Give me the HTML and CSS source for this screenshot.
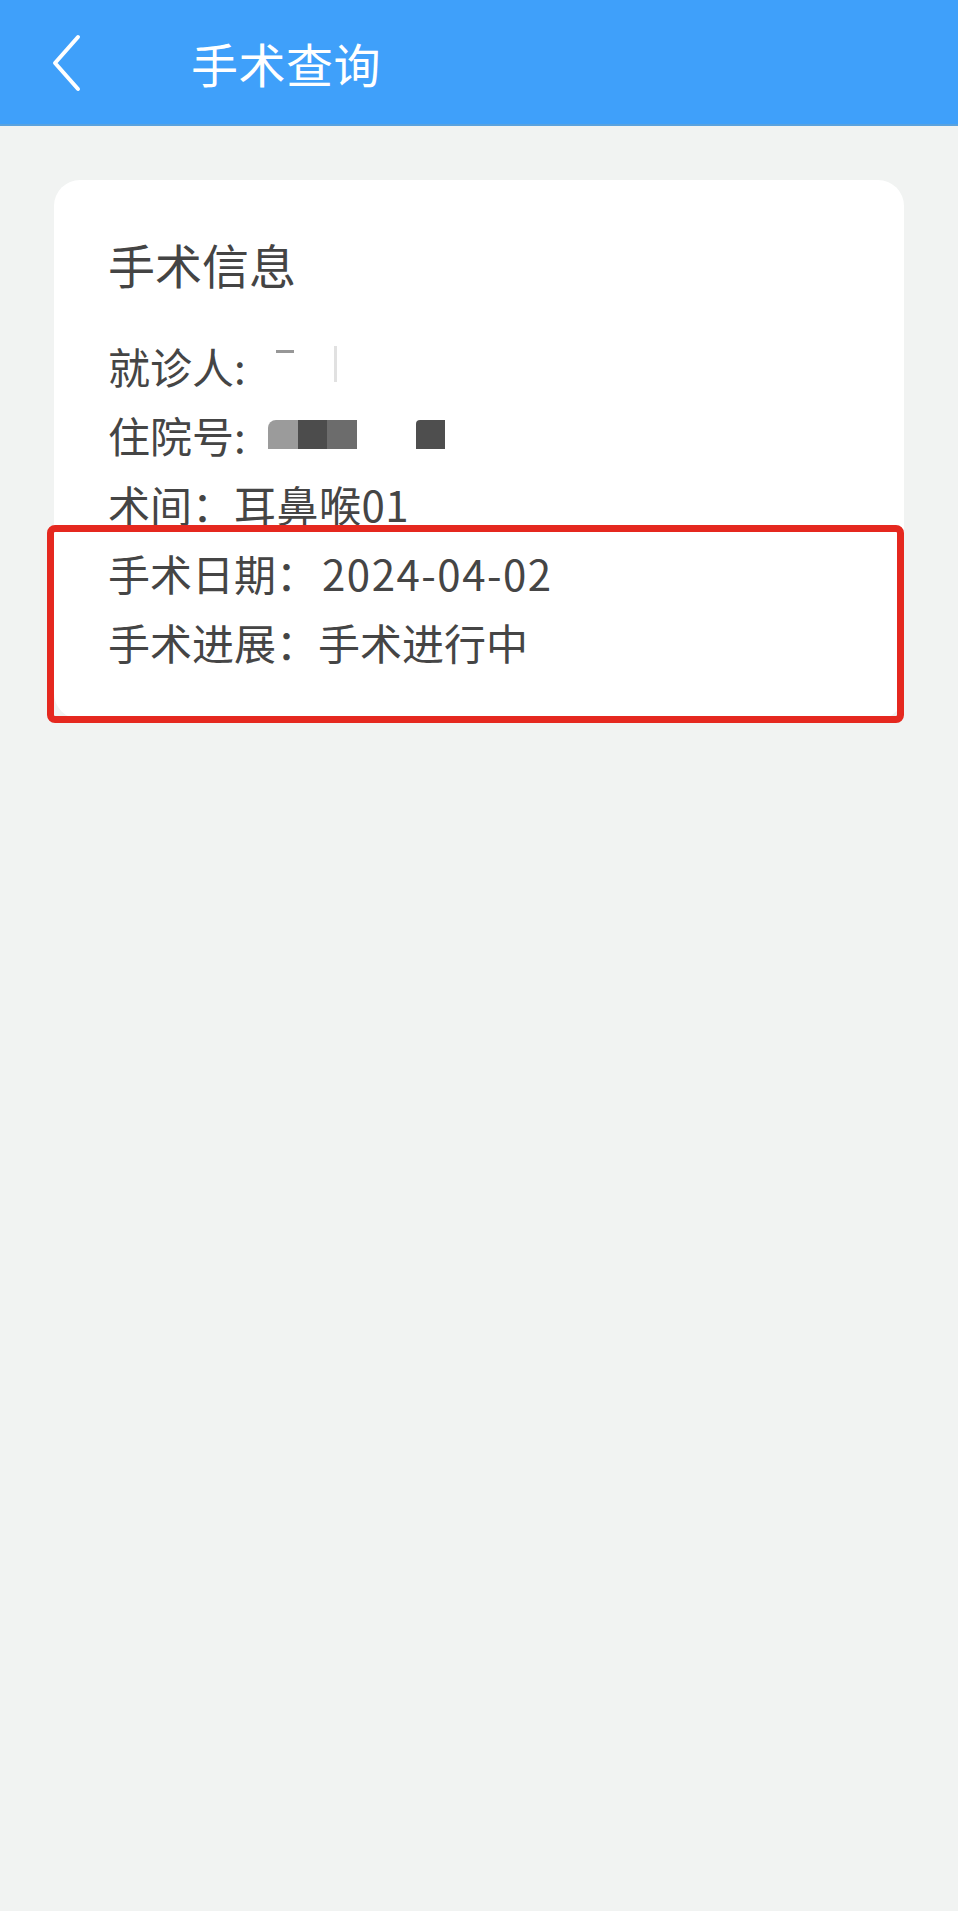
FILE: index.html
```html
<!DOCTYPE html>
<html lang="zh-CN">
<head>
<meta charset="utf-8">
<title>手术查询</title>
<link rel="stylesheet" href="styles.css">
</head>
<body>
<header class="topbar">
  <svg class="back" width="32" height="58" viewBox="0 0 32 58"><path d="M28 3 L5 29 L28 55" fill="none" stroke="#fff" stroke-width="4" stroke-linecap="round" stroke-linejoin="round"/></svg>
  <h1 class="title">手术查询</h1>
</header>
<main class="content">
  <section class="card">
    <h2 class="card-title">手术信息</h2>
    <div class="row"><span class="label">就诊人:</span><span class="blur-name"><i class="bn1"></i><i class="bn2"></i></span></div>
    <div class="row"><span class="label">住院号:</span><span class="pix"><i class="p1"></i><i class="p2"></i><i class="p3"></i><i class="pgap"></i><i class="p4"></i></span></div>
    <div class="row"><span class="label">术间：</span><span class="value room">耳鼻喉01</span></div>
    <div class="row"><span class="label">手术日期：</span><span class="value num">2024-04-02</span></div>
    <div class="row"><span class="label">手术进展：</span><span class="value">手术进行中</span></div>
    <div class="highlight"></div>
  </section>
</main>
</body>
</html>
```
FILE: styles.css
```css
* { box-sizing: border-box; }
html, body { margin: 0; padding: 0; }
body {
  width: 958px;
  min-height: 1911px;
  background: #f1f3f2;
  font-family: "Noto Sans CJK SC", "Noto Sans", sans-serif;
  color: #454545;
}
.topbar {
  height: 126px;
  background: #3fa0fa;
  border-bottom: 2px solid #5aa2de;
  display: flex;
  align-items: center;
  padding-left: 50px;
}
.back { display: block; margin-top: 2px; }
.title {
  margin: 0 0 0 109px;
  font-size: 47px;
  font-weight: 400;
  color: #fff;
  line-height: 1;
  letter-spacing: 0.5px;
}
.content { padding: 54px 54px 0; }
.card {
  position: relative;
  background: #fff;
  border-radius: 26px;
  padding: 51px 54px 43px;
}
.card-title {
  margin: 0 0 34px;
  font-size: 47px;
  font-weight: 400;
  line-height: 66px;
  color: #444;
}
.row {
  display: flex;
  align-items: center;
  height: 69px;
  font-size: 42px;
  color: #454545;
}
.label { white-space: nowrap; }
.value { white-space: nowrap; }
.room { letter-spacing: 0.5px; }
.num { letter-spacing: 1.5px; margin-left: 4px; }
.blur-name { position: relative; display: inline-block; width: 120px; height: 40px; margin-left: 24px; }
.blur-name i { position: absolute; display: block; background: #6b6b6b; }
.bn1 { left: 6px; top: 4px; width: 18px; height: 3px; opacity: .7; }
.bn2 { left: 64px; top: 0; width: 3px; height: 36px; opacity: .2; }
.pix { display: flex; margin-left: 22px; height: 29px; }
.pix i { display: block; height: 29px; }
.p1 { width: 30px; background: #9b9b9b; border-radius: 8px 0 0 0; }
.p2 { width: 29px; background: #4c4c4c; }
.p3 { width: 30px; background: #6c6c6c; }
.pgap { width: 59px; }
.p4 { width: 29px; background: #4e4e4e; border-radius: 4px 0 0 0; }
.highlight {
  position: absolute;
  left: -7px;
  top: 345px;
  width: 857px;
  height: 198px;
  border: 7px solid #e5281f;
  border-radius: 8px;
  pointer-events: none;
}
```
